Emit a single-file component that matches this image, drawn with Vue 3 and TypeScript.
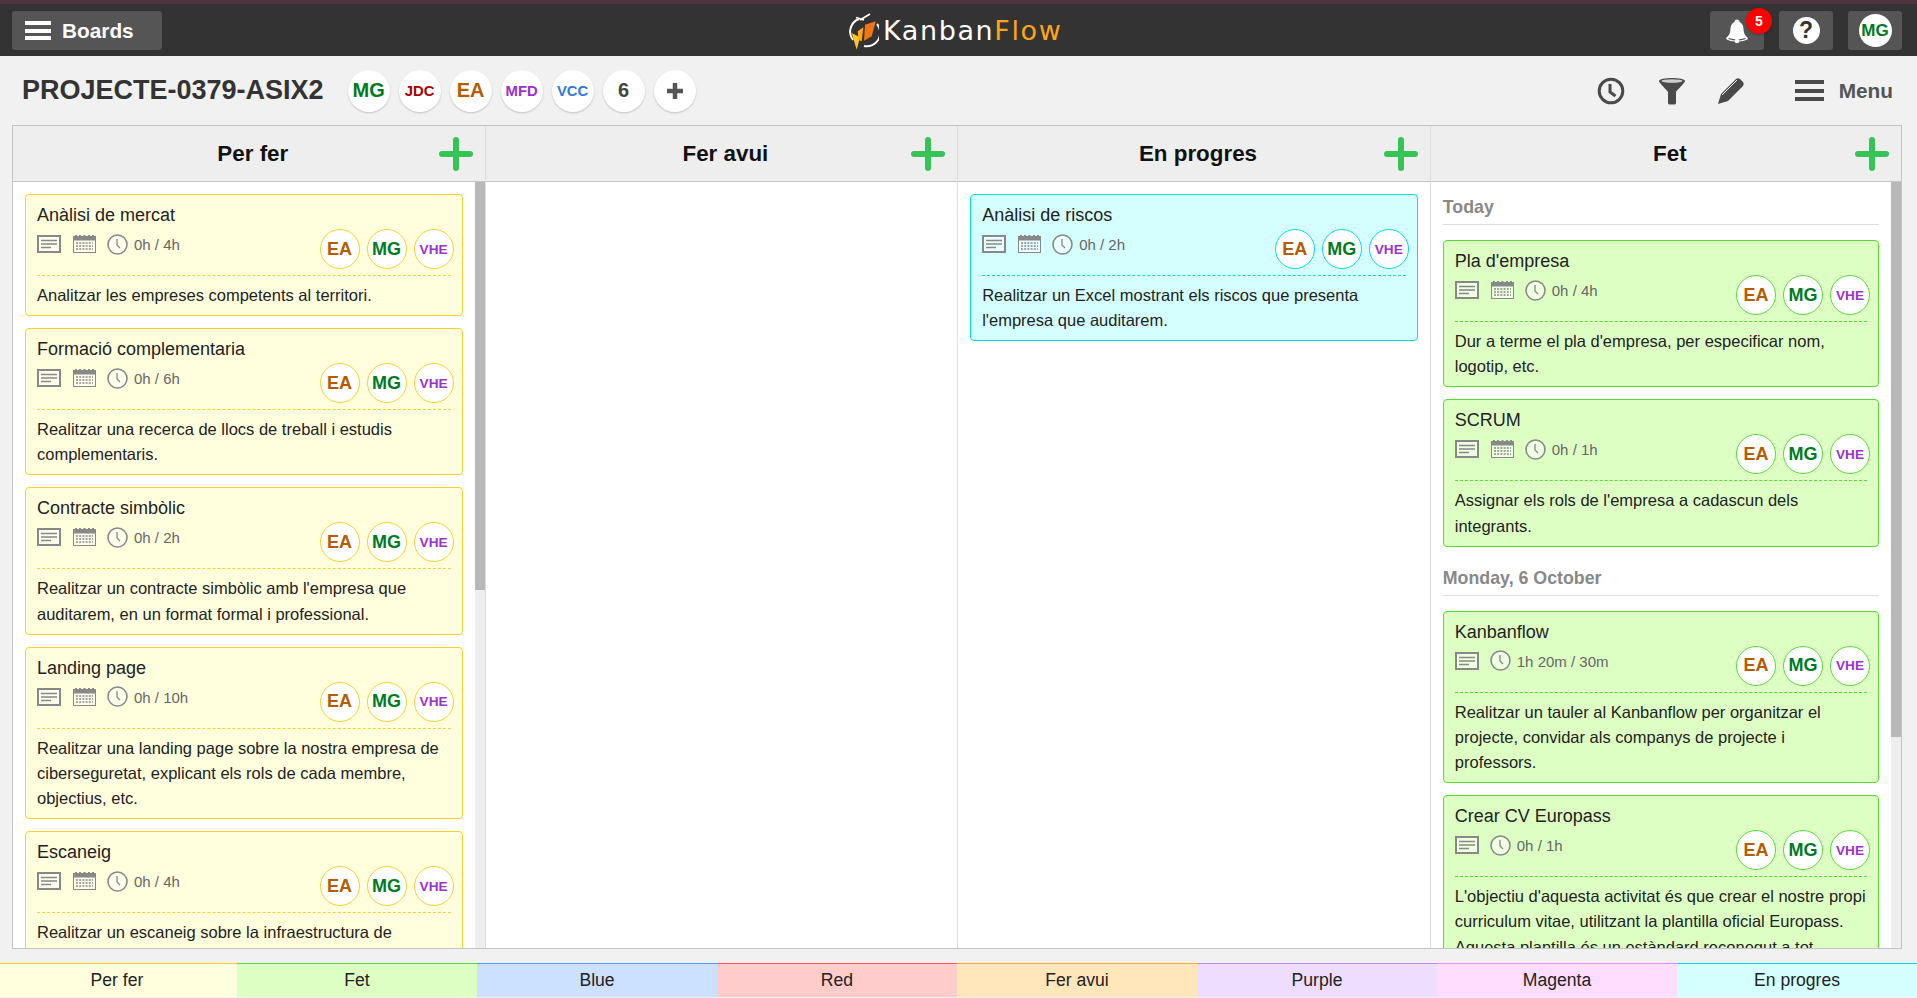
<script setup lang="ts">
interface Task {
  title: string
  time: string
  desc: string[]
  calendar?: boolean
}
interface Group {
  label?: string
  tasks: Task[]
}
interface Column {
  name: string
  tone: string
  scrollbar?: number
  groups: Group[]
}

const people = [
  { text: 'MG', color: '#007a1f' },
  { text: 'JDC', color: '#aa0000', small: true },
  { text: 'EA', color: '#b35c00' },
  { text: 'MFD', color: '#9933cc', small: true },
  { text: 'VCC', color: '#3377dd', small: true },
  { text: '6', color: '#444' }
]

const assignees = [
  { text: 'EA', color: '#b35c00' },
  { text: 'MG', color: '#007a1f' },
  { text: 'VHE', color: '#9933cc', small: true }
]

const columns: Column[] = [
  {
    name: 'Per fer',
    tone: 'yellow',
    scrollbar: 408,
    groups: [
      {
        tasks: [
          { title: 'Anàlisi de mercat', time: '0h / 4h', calendar: true, desc: ['Analitzar les empreses competents al territori.'] },
          { title: 'Formació complementaria', time: '0h / 6h', calendar: true, desc: ['Realitzar una recerca de llocs de treball i estudis', 'complementaris.'] },
          { title: 'Contracte simbòlic', time: '0h / 2h', calendar: true, desc: ["Realitzar un contracte simbòlic amb l'empresa que", 'auditarem, en un format formal i professional.'] },
          { title: 'Landing page', time: '0h / 10h', calendar: true, desc: ['Realitzar una landing page sobre la nostra empresa de', 'ciberseguretat, explicant els rols de cada membre,', 'objectius, etc.'] },
          { title: 'Escaneig', time: '0h / 4h', calendar: true, desc: ['Realitzar un escaneig sobre la infraestructura de', "l'empresa per detectar possibles vulnerabilitats."] }
        ]
      }
    ]
  },
  { name: 'Fer avui', tone: 'yellow', groups: [] },
  {
    name: 'En progres',
    tone: 'cyan',
    groups: [
      {
        tasks: [
          { title: 'Anàlisi de riscos', time: '0h / 2h', calendar: true, desc: ['Realitzar un Excel mostrant els riscos que presenta', "l'empresa que auditarem."] }
        ]
      }
    ]
  },
  {
    name: 'Fet',
    tone: 'green',
    scrollbar: 555,
    groups: [
      {
        label: 'Today',
        tasks: [
          { title: "Pla d'empresa", time: '0h / 4h', calendar: true, desc: ["Dur a terme el pla d'empresa, per especificar nom,", 'logotip, etc.'] },
          { title: 'SCRUM', time: '0h / 1h', calendar: true, desc: ["Assignar els rols de l'empresa a cadascun dels", 'integrants.'] }
        ]
      },
      {
        label: 'Monday, 6 October',
        tasks: [
          { title: 'Kanbanflow', time: '1h 20m / 30m', desc: ['Realitzar un tauler al Kanbanflow per organitzar el', 'projecte, convidar als companys de projecte i', 'professors.'] },
          { title: 'Crear CV Europass', time: '0h / 1h', desc: ["L'objectiu d'aquesta activitat és que crear el nostre propi", 'curriculum vitae, utilitzant la plantilla oficial Europass.', 'Aquesta plantilla és un estàndard reconegut a tot', 'Europa.'] }
        ]
      }
    ]
  }
]

const legend = [
  { name: 'Per fer', bg: '#ffffdd', line: '#ffcc22' },
  { name: 'Fet', bg: '#ddffc4', line: '#55dd33' },
  { name: 'Blue', bg: '#cce0ff', line: '#5599ff' },
  { name: 'Red', bg: '#ffcccc', line: '#ff5555' },
  { name: 'Fer avui', bg: '#ffe6bb', line: '#ffaa33' },
  { name: 'Purple', bg: '#eeddff', line: '#bb88ff' },
  { name: 'Magenta', bg: '#ffddff', line: '#ff88ff' },
  { name: 'En progres', bg: '#d5ffff', line: '#00dddd' }
]
</script>

<template>
  <div class="page">
    <header class="topbar">
      <button class="top-btn boards">
        <span class="burger white"><i></i><i></i><i></i></span>
        Boards
      </button>
      <div class="logo">
        <svg width="30" height="38" viewBox="0 0 30 38">
          <path d="M10 6 A13.500 13.500 0 0 0 4 27" fill="none" stroke="#fff" stroke-width="2" />
          <path d="M15 33 A13.500 13.500 0 0 0 28 11" fill="none" stroke="#fff" stroke-width="2" />
          <path d="M7 4.500 L15 7 M21 1 L11 7" stroke="#fff" stroke-width="1.600" fill="none" />
          <path d="M2.700 20 L11 24.300 L7.700 36.700 Z" fill="#ffc928" />
          <path d="M8.700 18.300 L14.300 14.300 L12.700 28.300 L9.500 27 Z" fill="#ffa914" />
          <path d="M16 11.700 L26.700 8.300 L22.700 23.300 L15 27.700 Z" fill="#f27412" />
        </svg>
        <span class="logo-text">Kanban<em>Flow</em></span>
      </div>
      <div class="top-right">
        <button class="top-btn square">
          <svg width="26" height="26" viewBox="0 0 26 26">
            <path d="M13 1.500 a2.500 2.500 0 0 1 2.500 2.500 C19 5.500 19.500 9 19.700 13 c.2 3 2 5 4.300 7 c0 2-5 3.500-11 3.500 S2 22 2 20 c2.300-2 4.100-4 4.300-7 c.2-4 .7-7.500 4.200-9 A2.500 2.500 0 0 1 13 1.500z" fill="#fff" />
            <path d="M4.500 20.500 Q13 23.500 21.500 20.500" fill="none" stroke="#555" stroke-width="1.200" />
            <circle cx="13" cy="23" r="2.300" fill="#fff" />
          </svg>
          <span class="badge">5</span>
        </button>
        <button class="top-btn square">
          <span class="help">?</span>
        </button>
        <button class="top-btn square user">
          <span class="user-face">MG</span>
        </button>
      </div>
    </header>

    <section class="subbar">
      <h1 class="project">PROJECTE-0379-ASIX2</h1>
      <div class="people">
        <span
          v-for="p in people"
          :key="p.text"
          class="person"
          :class="{ small: p.small }"
          :style="{ color: p.color }"
        >{{ p.text }}</span>
        <span class="person">
          <svg width="18" height="18" viewBox="0 0 18 18"><path d="M9 1v16M1 9h16" stroke="#555" stroke-width="4.500" /></svg>
        </span>
      </div>
      <div class="tools">
        <svg width="28" height="28" viewBox="0 0 28 28">
          <circle cx="14" cy="14" r="11.800" fill="none" stroke="#4a4a4a" stroke-width="3" />
          <path d="M13 7v8l5.500 4" fill="none" stroke="#4a4a4a" stroke-width="3" />
        </svg>
        <svg class="funnel" width="28" height="28" viewBox="0 0 28 28">
          <path d="M1 4 C1 0 27 0 27 4 C27 6 19 13 18 15 V26 Q18 27.500 16 27.500 H12 Q10 27.500 10 26 V15 C9 13 1 6 1 4 Z" fill="#4a4a4a" />
          <ellipse cx="14" cy="4" rx="10.500" ry="1.800" fill="#cfcfcf" />
        </svg>
        <svg class="pencil" width="28" height="28" viewBox="0 0 28 28">
          <path d="M1 27 L4 17 L19 2 Q21 0.500 23 2 L26 5 Q27.500 7 26 9 L11 24 Z" fill="#4a4a4a" />
          <path d="M5 18 L20 3" stroke="#f1f1f1" stroke-width="1" />
        </svg>
        <div class="menu">
          <span class="burger dark"><i></i><i></i><i></i></span>
          Menu
        </div>
      </div>
    </section>

    <main class="board">
      <div v-for="col in columns" :key="col.name" class="column">
        <div class="col-head">
          {{ col.name }}
          <svg class="add" width="34" height="34" viewBox="0 0 34 34">
            <path d="M17 3v28M3 17h28" stroke="#36c457" stroke-width="6" stroke-linecap="round" />
          </svg>
        </div>
        <div class="col-body">
          <div class="col-scroll">
            <template v-for="(group, i) in col.groups" :key="i">
              <div v-if="group.label" class="day">{{ group.label }}</div>
              <article v-for="task in group.tasks" :key="task.title" class="card" :class="col.tone">
                <div class="card-title">{{ task.title }}</div>
                <div class="card-meta">
                  <div class="meta-left">
                    <svg width="24" height="18" viewBox="0 0 24 18">
                      <rect x="1" y="1" width="22" height="16" fill="#fff" fill-opacity=".5" stroke="#888" stroke-width="2" />
                      <path d="M4 5.500h16M4 9h16M4 12.500h10" stroke="#888" stroke-width="1.500" />
                    </svg>
                    <svg v-if="task.calendar" width="23" height="18" viewBox="0 0 23 18">
                      <rect x=".5" y="1.500" width="22" height="16" fill="#fff" fill-opacity=".5" stroke="#888" />
                      <rect x=".5" y="1.500" width="22" height="4" fill="#888" />
                      <path d="M3 0v3M7 0v3M11.500 0v3M16 0v3M20 0v3" stroke="#888" stroke-width="2" />
                      <path d="M3 8h17M3 11h17M3 14h17" stroke="#888" stroke-width="1.600" stroke-dasharray="2 1.200" />
                    </svg>
                    <svg width="21" height="21" viewBox="0 0 21 21" class="clock">
                      <circle cx="10.500" cy="10.500" r="9.500" fill="#fff" fill-opacity=".5" stroke="#888" stroke-width="1.600" />
                      <path d="M10 5v6l3 3" fill="none" stroke="#888" stroke-width="1.300" />
                    </svg>
                    <span class="time">{{ task.time }}</span>
                  </div>
                  <div class="card-people">
                    <span
                      v-for="a in assignees"
                      :key="a.text"
                      class="assignee"
                      :class="{ small: a.small }"
                      :style="{ color: a.color }"
                    >{{ a.text }}</span>
                  </div>
                </div>
                <div class="card-desc">
                  <div v-for="line in task.desc" :key="line">{{ line }}</div>
                </div>
              </article>
            </template>
          </div>
          <div v-if="col.scrollbar" class="scrollbar">
            <div class="thumb" :style="{ height: col.scrollbar + 'px' }"></div>
          </div>
        </div>
      </div>
    </main>

    <footer class="legend">
      <div
        v-for="item in legend"
        :key="item.name"
        class="legend-item"
        :style="{ background: item.bg, borderTopColor: item.line }"
      >{{ item.name }}</div>
    </footer>
  </div>
</template>

<style>
html,
body {
  margin: 0;
  overflow: hidden;
}
</style>

<style scoped>
.page {
  height: 998px;
  display: flex;
  flex-direction: column;
  background: #f1f1f1;
  font-family: "Liberation Sans", Arial, sans-serif;
  color: #222;
}

.topbar {
  position: relative;
  height: 52px;
  flex: none;
  display: flex;
  align-items: center;
  justify-content: space-between;
  padding: 0 15px 0 12px;
  background: #333;
  border-top: 4px solid #50333f;
}

.top-btn {
  position: relative;
  height: 39px;
  border: 0;
  border-radius: 3px;
  background: #555;
  color: #fff;
  font: bold 20.8px "Liberation Sans", Arial, sans-serif;
  display: flex;
  align-items: center;
  justify-content: center;
  padding: 0;
}

.boards {
  width: 150px;
  justify-content: flex-start;
  padding-left: 13px;
  gap: 11px;
  margin-top: 1px;
}

.burger {
  display: flex;
  flex-direction: column;
  justify-content: space-between;
}

.burger i {
  display: block;
  height: 4px;
}

.burger.white {
  width: 26px;
  height: 19px;
}

.burger.white i {
  background: #fff;
}

.burger.dark {
  width: 29px;
  height: 21px;
}

.burger.dark i {
  background: #4a4a4a;
}

.logo {
  position: absolute;
  left: 849px;
  top: 9px;
  display: flex;
  align-items: flex-start;
  gap: 4px;
}

.logo-text {
  margin-top: 2px;
  font: 27px/32px "DejaVu Sans", sans-serif;
  color: #fff;
  letter-spacing: 1.600px;
}

.logo-text em {
  font-style: normal;
  color: #ffa31a;
}

.top-right {
  display: flex;
  gap: 15px;
  margin-top: 1px;
}

.square {
  width: 54px;
}

.badge {
  position: absolute;
  left: 36px;
  top: -3px;
  width: 26px;
  height: 26px;
  border-radius: 50%;
  background: #ff0000;
  color: #fff;
  font-size: 14px;
  line-height: 26px;
  text-align: center;
  box-shadow: 0 1px 3px rgba(0, 0, 0, 0.25);
}

.help {
  width: 27px;
  height: 27px;
  border-radius: 50%;
  background: #fff;
  color: #333;
  font-size: 23px;
  line-height: 27px;
  text-align: center;
}

.user-face {
  width: 33px;
  height: 33px;
  border-radius: 50%;
  background: #fff;
  color: #007a1f;
  font-size: 17px;
  line-height: 33px;
  text-align: center;
}

.subbar {
  height: 69px;
  flex: none;
  display: flex;
  align-items: center;
  padding: 0 24px 0 22px;
}

.project {
  margin: 0 24px 0 0;
  font-size: 27px;
  font-weight: bold;
  color: #333;
  white-space: nowrap;
}

.people {
  display: flex;
  gap: 9px;
}

.person {
  width: 42px;
  height: 42px;
  border-radius: 50%;
  background: #fff;
  box-shadow: 0 1px 2px rgba(0, 0, 0, 0.2);
  display: flex;
  align-items: center;
  justify-content: center;
  font-size: 20px;
  font-weight: bold;
}

.person.small {
  font-size: 14.800px;
}

.tools {
  margin-left: auto;
  display: flex;
  align-items: center;
}

.funnel {
  margin-left: 33px;
}

.pencil {
  margin-left: 31px;
}

.menu {
  margin-left: 50px;
  display: flex;
  align-items: center;
  gap: 15px;
  font-size: 20.800px;
  font-weight: bold;
  color: #555;
}

.board {
  height: 824px;
  flex: none;
  margin: 0 15px 0 12px;
  box-sizing: border-box;
  border: 1px solid #c4c4c4;
  background: #fff;
  display: grid;
  grid-template-columns: 472.600px 472.600px 472.600px minmax(0, 1fr);
  overflow: hidden;
}

.column {
  min-width: 0;
  display: flex;
  flex-direction: column;
  border-right: 1px solid #ddd;
}

.column:last-child {
  border-right: 0;
}

.col-head {
  position: relative;
  height: 55px;
  flex: none;
  padding-left: 8px;
  background: #eee;
  border-bottom: 1px solid #c4c4c4;
  display: flex;
  align-items: center;
  justify-content: center;
  font-size: 22.400px;
  font-weight: bold;
  color: #111;
}

.add {
  position: absolute;
  right: 12px;
  top: 11px;
}

.col-body {
  flex: 1;
  min-height: 0;
  display: flex;
}

.col-scroll {
  flex: 1;
  min-width: 0;
  padding: 12px;
  display: flex;
  flex-direction: column;
  gap: 12px;
  overflow: hidden;
}

.scrollbar {
  width: 10px;
  flex: none;
  background: #eee;
}

.thumb {
  background: #b8b8b8;
}

.day {
  flex: none;
  margin-bottom: 3px;
  padding-bottom: 4px;
  line-height: 26px;
  border-bottom: 1px solid #ddd;
  font-size: 17.800px;
  font-weight: bold;
  color: #888;
}

.day ~ .day {
  margin-top: 6px;
}

.card {
  flex: none;
  border: 1px solid;
  border-radius: 4px;
  padding: 8px 11px 6.900px;
}

.card.yellow {
  background: #ffffdd;
  border-color: #f9cf2d;
}

.card.green {
  background: #ddffc4;
  border-color: #55dd33;
}

.card.cyan {
  background: #d5ffff;
  border-color: #00dddd;
}

.card-title {
  font-size: 18px;
  line-height: 24px;
}

.card-meta {
  display: flex;
  justify-content: space-between;
  margin-top: 2px;
  padding-bottom: 6px;
  border-bottom: 1px dashed;
}

.yellow .card-meta {
  border-bottom-color: #f9cf2d;
}

.green .card-meta {
  border-bottom-color: #55dd33;
}

.cyan .card-meta {
  border-bottom-color: #00dddd;
}

.meta-left {
  display: flex;
  align-items: center;
  gap: 12px;
  height: 30px;
}

.meta-left .clock {
  margin-left: -1px;
}

.time {
  margin: 1px 0 0 -6px;
  font-size: 15px;
  color: #666;
}

.card-people {
  display: flex;
  gap: 7px;
  margin-right: -3px;
}

.assignee {
  width: 40px;
  height: 40px;
  box-sizing: border-box;
  border: 1.300px solid;
  border-radius: 50%;
  background: #fff;
  display: flex;
  align-items: center;
  justify-content: center;
  font-size: 18px;
  font-weight: bold;
}

.assignee.small {
  font-size: 13.600px;
}

.yellow .assignee {
  border-color: #f9cf2d;
}

.green .assignee {
  border-color: #55dd33;
}

.cyan .assignee {
  border-color: #00dddd;
}

.card-desc {
  margin-top: 7px;
  font-size: 16.500px;
  line-height: 25.200px;
}

.legend {
  margin: 14px 0 0 -3px;
  height: 34px;
  flex: none;
  display: grid;
  grid-template-columns: repeat(8, 240px);
}

.legend-item {
  box-sizing: border-box;
  border-top: 1px solid;
  text-align: center;
  font-size: 17.600px;
  line-height: 33px;
}
</style>
